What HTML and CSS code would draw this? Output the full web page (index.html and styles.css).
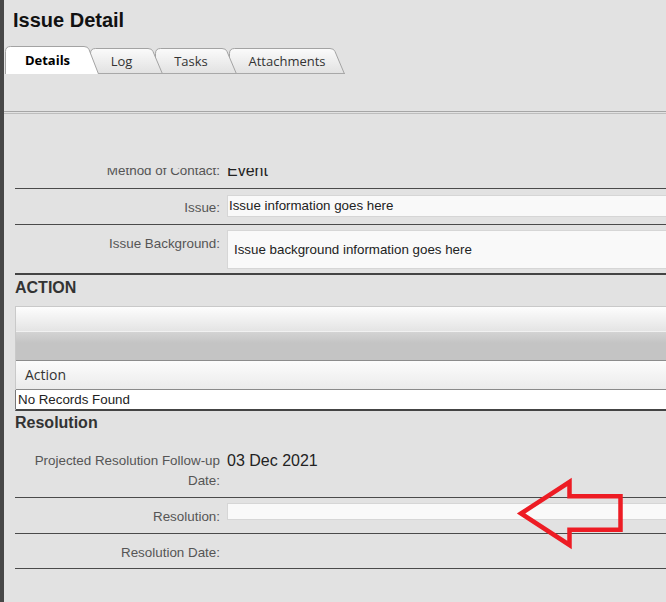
FILE: index.html
```html
<!DOCTYPE html>
<html lang="en">

<head>
    <meta charset="UTF-8">
    <title>Issue Detail</title>
    <meta name="viewport" content="width=device-width, initial-scale=1.0">
    <link rel="stylesheet" href="styles.css">
</head>

<body>
    <div class="page">
        <div class="side-strip"></div>

        <div class="main">
            <h1 class="page-title">Issue Detail</h1>

            <div class="tabs">
                <div class="tab tab-active tab-details">
                    <svg class="tab-shape" width="94" height="28" viewBox="0 0 94 28">
                        <path d="M0.5 28 V5.5 Q0.5 0.5 5.5 0.5 H79 Q83 0.5 84 3.5 L93.5 28" fill="#fff" stroke="#a3a3a3" />
                    </svg>
                    <span class="tab-text">Details</span>
                </div>
                <div class="tab tab-log">
                    <svg class="tab-shape" width="73" height="26" viewBox="0 0 73 26">
                        <defs>
                            <linearGradient id="gLog" x1="0" y1="0" x2="0" y2="1">
                                <stop offset="0" stop-color="#fbfbfb" />
                                <stop offset="1" stop-color="#e1e1e1" />
                            </linearGradient>
                        </defs>
                        <path d="M0.5 26 V5.5 Q0.5 0.5 5.5 0.5 H58 Q62 0.5 63 3.5 L72.5 26" fill="url(#gLog)" stroke="#a3a3a3" />
                        <path d="M0 25.5 H73" stroke="#a8a8a8" />
                    </svg>
                    <span class="tab-text">Log</span>
                </div>
                <div class="tab tab-tasks">
                    <svg class="tab-shape" width="82" height="26" viewBox="0 0 82 26">
                        <defs>
                            <linearGradient id="gTasks" x1="0" y1="0" x2="0" y2="1">
                                <stop offset="0" stop-color="#fbfbfb" />
                                <stop offset="1" stop-color="#e1e1e1" />
                            </linearGradient>
                        </defs>
                        <path d="M0.5 26 V5.5 Q0.5 0.5 5.5 0.5 H67 Q71 0.5 72 3.5 L81.5 26" fill="url(#gTasks)" stroke="#a3a3a3" />
                        <path d="M0 25.5 H82" stroke="#a8a8a8" />
                    </svg>
                    <span class="tab-text">Tasks</span>
                </div>
                <div class="tab tab-attachments">
                    <svg class="tab-shape" width="116" height="26" viewBox="0 0 116 26">
                        <defs>
                            <linearGradient id="gAtt" x1="0" y1="0" x2="0" y2="1">
                                <stop offset="0" stop-color="#fbfbfb" />
                                <stop offset="1" stop-color="#e1e1e1" />
                            </linearGradient>
                        </defs>
                        <path d="M0.5 26 V5.5 Q0.5 0.5 5.5 0.5 H101 Q105 0.5 106 3.5 L115.5 26" fill="url(#gAtt)" stroke="#a3a3a3" />
                        <path d="M0 25.5 H116" stroke="#a8a8a8" />
                    </svg>
                    <span class="tab-text">Attachments</span>
                </div>
            </div>

            <div class="tab-rule"></div>

            <div class="scroll-box">
                <div class="form">
                    <div class="row">
                        <div class="label">Method of Contact:</div>
                        <div class="value">Event</div>
                    </div>
                    <div class="row">
                        <div class="label">Issue:</div>
                        <div class="value value-input">
                            <div class="text-input">Issue information goes here</div>
                        </div>
                    </div>
                    <div class="row row-end">
                        <div class="label">Issue Background:</div>
                        <div class="value value-area">
                            <div class="text-area">Issue background information goes here</div>
                        </div>
                    </div>

                    <h2 class="section-title">ACTION</h2>
                    <div class="grid">
                        <div class="grid-toolbar"></div>
                        <div class="grid-group"></div>
                        <div class="grid-head">Action</div>
                        <div class="grid-empty">No Records Found</div>
                    </div>

                    <h2 class="section-title section-resolution">Resolution</h2>
                    <div class="row">
                        <div class="label">Projected Resolution Follow-up Date:</div>
                        <div class="value">03 Dec 2021</div>
                    </div>
                    <div class="row">
                        <div class="label">Resolution:</div>
                        <div class="value value-small">
                            <div class="text-input small-input"></div>
                        </div>
                    </div>
                    <div class="row row-last">
                        <div class="label">Resolution Date:</div>
                        <div class="value value-empty"></div>
                    </div>
                </div>
            </div>
        </div>
    </div>

    <!-- callout drawn on top of the screenshot -->
    <svg class="callout" width="666" height="602" viewBox="0 0 666 602">
        <polygon points="521,513.5 569.5,482 569.5,496.3 620.5,496.3 620.5,529.7 569.5,529.7 569.5,545" fill="none" stroke="#ed1c24" stroke-width="4.5" />
    </svg>
</body>

</html>
```

FILE: styles.css
```css
html,
body {
    margin: 0;
    padding: 0;
    height: 100%;
    overflow: hidden;
    background-color: #e2e2e2;
    font-family: "Liberation Sans", Arial, sans-serif;
}

.page {
    display: flex;
    height: 100%;
}

.side-strip {
    width: 4px;
    flex: none;
    background-color: #474747;
}

.main {
    flex: 1;
    min-width: 0;
    overflow: hidden;
}

.page-title {
    margin: 8px 0 0 9px;
    font-size: 20px;
    line-height: 24px;
    font-weight: bold;
    color: #111;
}

/* tabs */
.tabs {
    display: flex;
    align-items: flex-end;
    height: 28px;
    margin: 14px 0 0 1px;
}

.tab {
    position: relative;
    height: 26px;
    flex: none;
    font-family: "Open Sans", "Noto Sans", sans-serif;
    font-size: 13px;
    color: #333;
}

.tab-shape {
    position: absolute;
    left: 0;
    top: 0;
}

.tab-text {
    position: relative;
    display: block;
    padding-right: 10px;
    text-align: center;
    line-height: 26px;
}

.tab-active {
    height: 28px;
    color: #000;
    font-weight: bold;
}

.tab-active .tab-text {
    padding-left: 1px;
    line-height: 29px;
}

.tab-details {
    width: 94px;
    z-index: 4;
}

.tab-log {
    width: 73px;
    margin-left: -9px;
    z-index: 3;
}

.tab-tasks {
    width: 82px;
    margin-left: -8px;
    z-index: 2;
}

.tab-attachments {
    width: 116px;
    margin-left: -8px;
    z-index: 1;
}

.tab-attachments .tab-text {
    padding-left: 10px;
}

.tab-rule {
    height: 1px;
    margin-top: 37px;
    border-top: 1px solid #a6a6a6;
    border-bottom: 1px solid #bdbdbd;
}

/* form body */
.scroll-box {
    margin-top: 54px;
    height: 434px;
    padding-left: 11px;
    overflow: hidden;
}

.form {
    width: 720px;
    margin-top: -16px;
}

.row {
    display: grid;
    grid-template-columns: 205px 1fr;
    column-gap: 7px;
    border-bottom: 1px solid #4a4a4a;
}

.row-end {
    border-bottom: 2px solid #444;
}

.label {
    padding: 9px 0 6px;
    text-align: right;
    font-size: 13.4px;
    line-height: 20px;
    color: #555;
}

.row-last .label {
    padding-bottom: 5px;
}

.value {
    padding: 9px 0 7px;
    font-size: 16px;
    line-height: 20px;
    color: #222;
}

.value-input {
    padding: 6px 0 7px;
}

.value-area {
    padding: 5px 0 4px;
}

.value-small {
    padding: 5px 0 0;
}

.value-empty {
    padding: 0;
}

.text-input {
    height: 20px;
    padding-left: 1px;
    border: 1px solid #d6d6d6;
    background-color: #f9f9f9;
    font-size: 13.33px;
    line-height: 20px;
    color: #222;
}

.small-input {
    height: 15px;
}

.text-area {
    height: 37px;
    padding-left: 6px;
    border: 1px solid #d6d6d6;
    background-color: #f9f9f9;
    font-size: 13.33px;
    line-height: 37px;
    color: #222;
}

.section-title {
    margin: 3px 0 8px;
    font-size: 16px;
    line-height: 20px;
    font-weight: bold;
    color: #333;
}

.section-resolution {
    margin: 2px 0 9px;
}

/* grid */
.grid {
    border-top: 1px solid #c9c9c9;
    border-left: 1px solid #c9c9c9;
    border-bottom: 2px solid #444;
}

.grid-toolbar {
    height: 24px;
    border-bottom: 1px solid #f1f1f1;
    background: linear-gradient(#fdfdfd, #e4e4e4);
}

.grid-group {
    height: 28px;
    border-bottom: 1px solid #8c8c8c;
    background: linear-gradient(#d3d3d3, #c4c4c4 40%, #c4c4c4);
}

.grid-head {
    height: 28px;
    padding-left: 9px;
    border-bottom: 1px solid #8a8a8a;
    background: linear-gradient(#fcfcfc, #ebebeb);
    font-family: "Open Sans", "Noto Sans", sans-serif;
    font-size: 14px;
    line-height: 28px;
    color: #333;
}

.grid-empty {
    height: 19px;
    margin-left: -1px;
    padding-left: 2px;
    border-left: 1px solid #777;
    background-color: #fff;
    font-size: 13.33px;
    line-height: 19px;
    color: #222;
}

.callout {
    position: absolute;
    left: 0;
    top: 0;
    pointer-events: none;
}
```
